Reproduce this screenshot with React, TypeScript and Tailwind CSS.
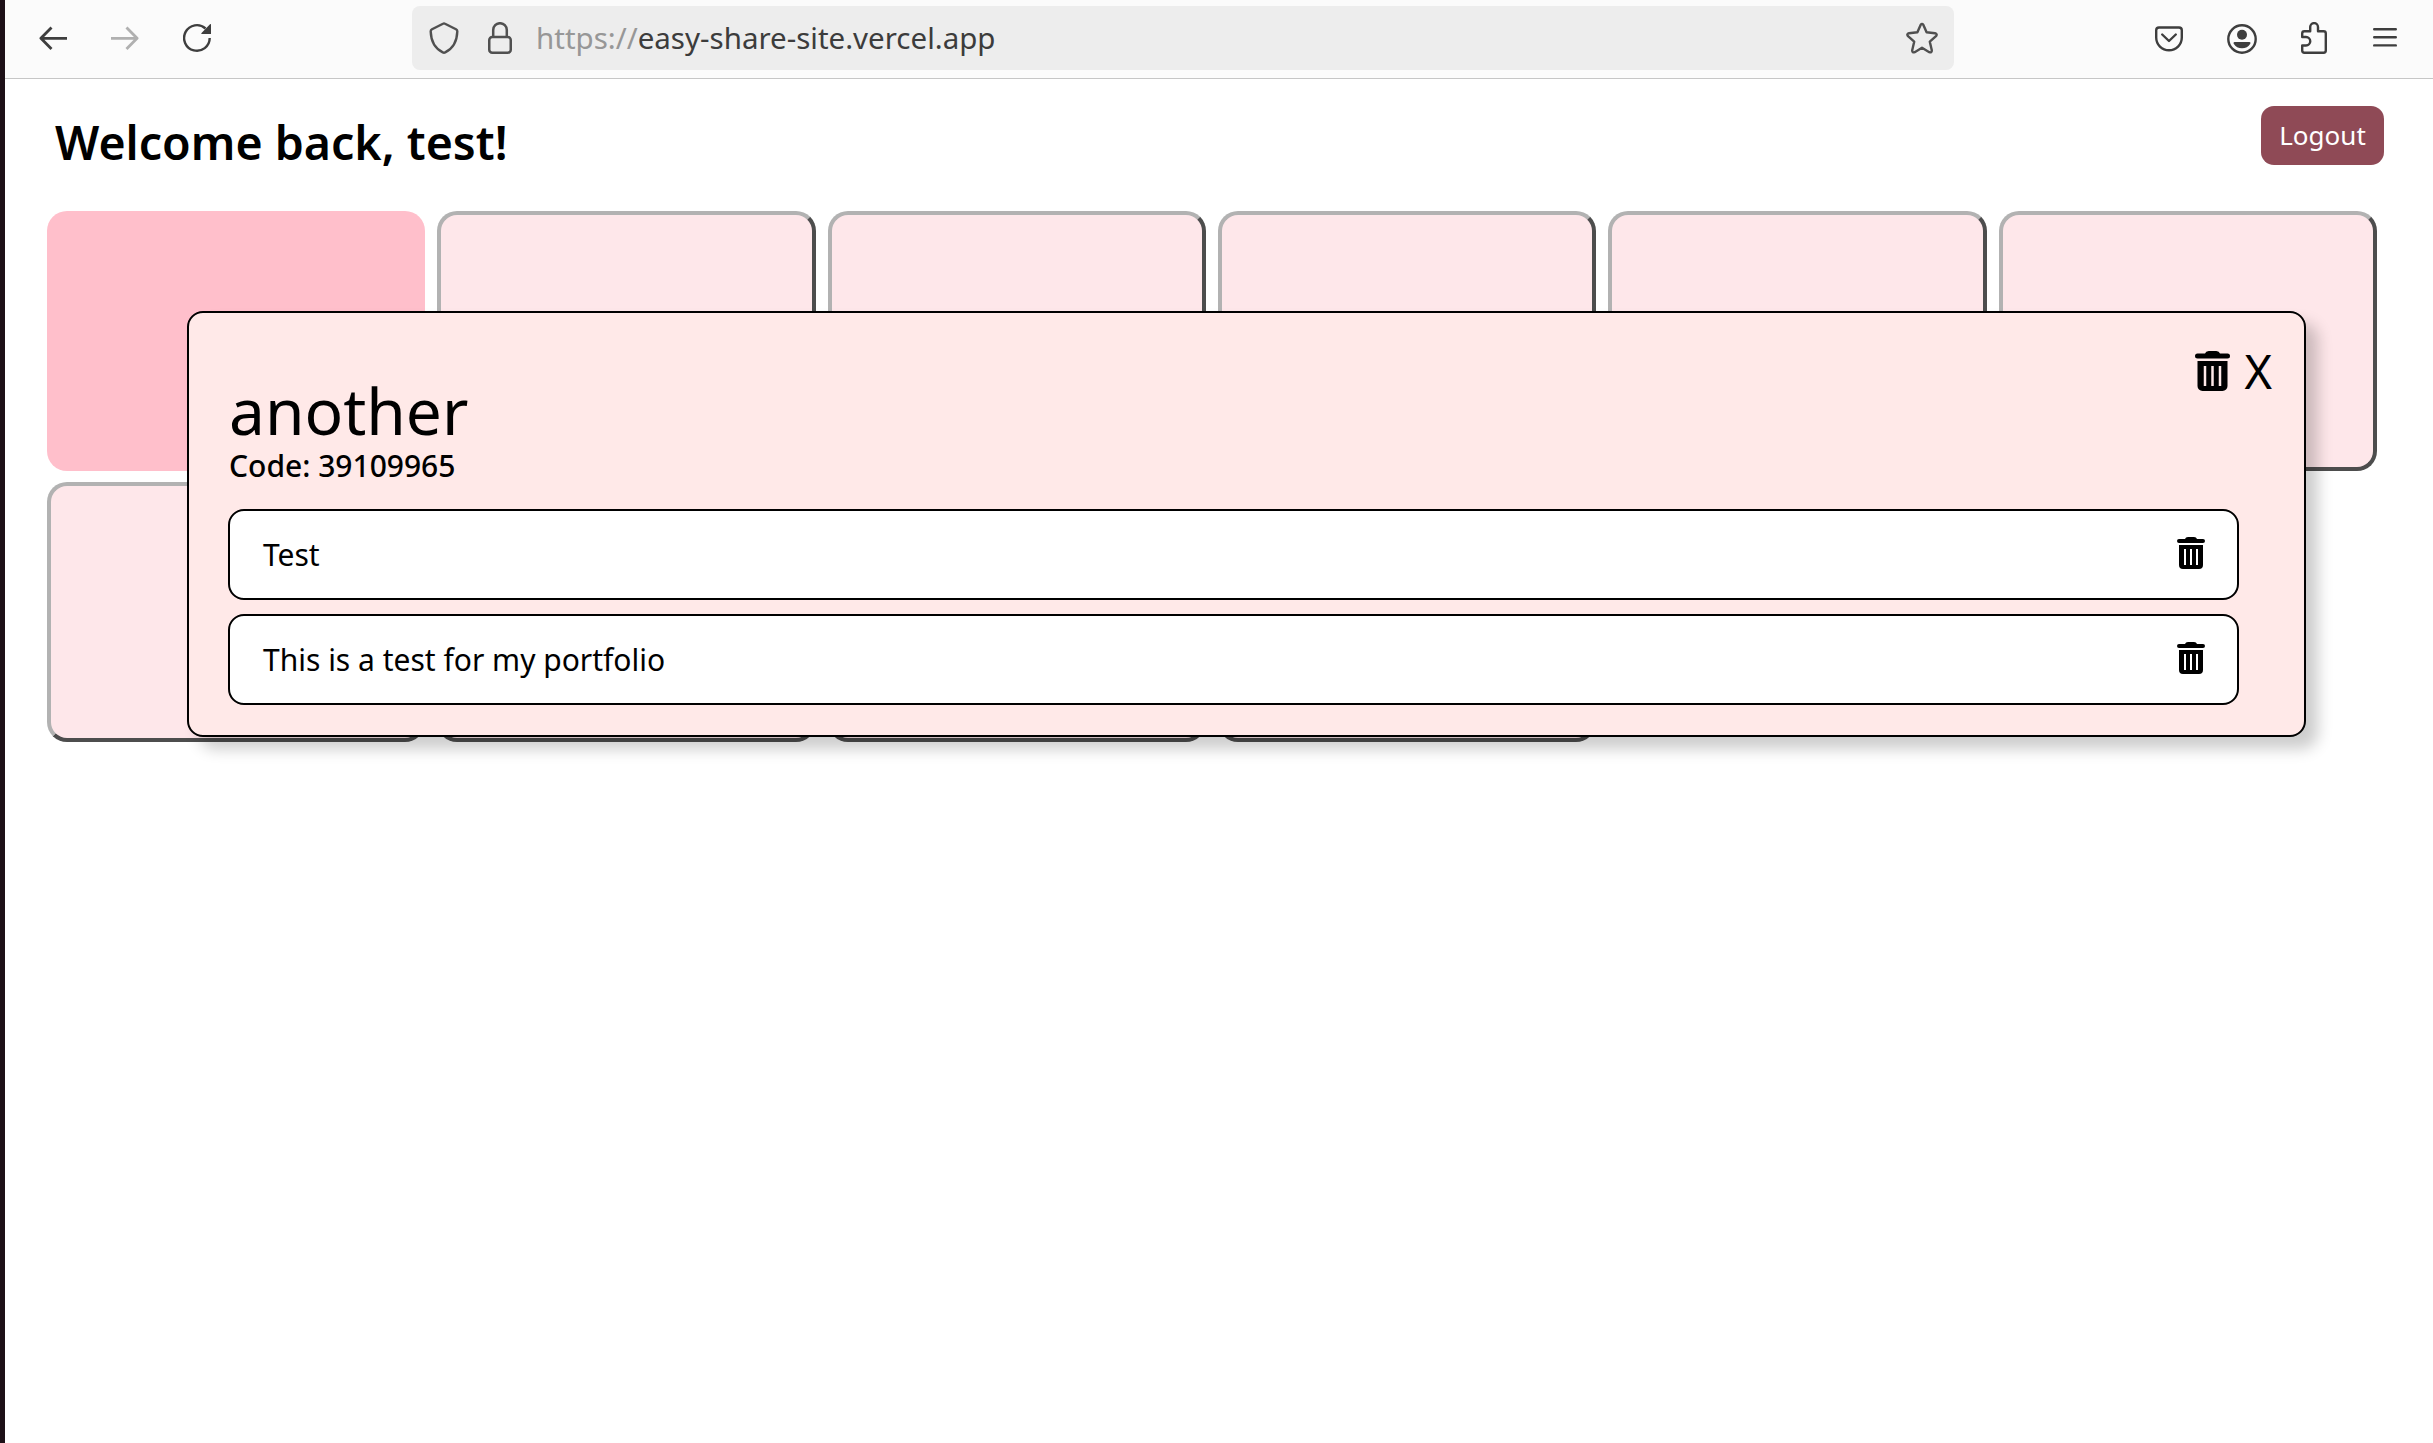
import React from "react";

function TrashIcon({ className }: { className: string }) {
  return (
    <svg viewBox="0 0 28 32" fill="currentColor" className={className} preserveAspectRatio="none">
      <path d="M2 2H8Q8.600 0 11 0H17Q19.400 0 20 2H26A2 2 0 0 1 26 6H2A2 2 0 0 1 2 2Z" />
      <path
        fillRule="evenodd"
        d="M2 8H26V28A4 4 0 0 1 22 32H6A4 4 0 0 1 2 28ZM7 12V28H9V12ZM13 12V28H15V12ZM19 12V28H21V12Z"
      />
    </svg>
  );
}

function BrowserBar() {
  return (
    <header className="flex h-[79px] items-center border-b border-[#c6c6c6] bg-[#fbfbfb] pb-0.5 pl-[34px] text-[#3e3e3e]">
      <svg className="h-8 w-7 shrink-0" viewBox="0 0 28 32" fill="none" stroke="currentColor" strokeWidth="2.8">
        <path d="M28 16.300H2M12.500 5.500L1.900 16.300L12.500 27" strokeLinejoin="round" />
      </svg>
      <svg className="ml-11 h-8 w-7 shrink-0 text-[#b0b0b0]" viewBox="0 0 28 32" fill="none" stroke="currentColor" strokeWidth="2.8">
        <path d="M0 16.300H26M15.500 5.500L26.100 16.300L15.500 27" strokeLinejoin="round" />
      </svg>
      <svg className="ml-11 h-8 w-7 shrink-0" viewBox="0 0 28 32" fill="none" stroke="currentColor" strokeWidth="2.4">
        <path d="M26.700 16A12.800 12.800 0 1 1 22.500 6.500" />
        <path d="M28 2V12H18.500Q18 11.500 18.500 11L27 2.300Z" fill="currentColor" stroke="none" />
      </svg>

      <div className="ml-[201px] flex h-16 w-[1542px] shrink-0 items-center rounded-lg bg-[#ededed] pr-4 pl-[17px] text-[#505050]">
        <svg className="h-8 w-[30px] shrink-0" viewBox="0 0 30 32" fill="none" stroke="currentColor" strokeWidth="2.400" strokeLinejoin="round">
          <path d="M14 1.700Q15 1 16 1.700L27 7.200Q28.400 8 28.300 9.500C28 19 24 26.500 16.200 30.400Q15 31 13.800 30.400C6 26.500 2 19 1.700 9.500Q1.600 8 3 7.200Z" />
        </svg>
        <svg className="ml-[29px] h-8 w-6 shrink-0" viewBox="0 0 24 32" fill="none" stroke="currentColor" strokeWidth="2.500">
          <rect x="1.250" y="15" width="21.500" height="15.700" rx="3" />
          <path d="M5.200 15V8A6.800 6.800 0 0 1 18.800 8V15" />
        </svg>
        <p className="ml-6 font-['Noto_Sans',sans-serif] text-[29.500px] leading-none whitespace-nowrap text-[#3c3c3c]">
          <span className="text-[#979797]">https://</span>easy-share-site.vercel.app
        </p>
        <svg className="ml-auto h-8 w-8 shrink-0" viewBox="0 0 32 32" fill="none" stroke="currentColor" strokeWidth="2.400" strokeLinejoin="round">
          <path d="M14.600 2.900Q16 1 17.400 2.900L20.600 10.300L29 11.200Q31.700 12 30 14.200L23.800 19.700L25.800 28.200Q25.900 31 23.300 30.200L16 25.800L8.700 30.200Q6.100 31 6.200 28.200L8.200 19.700L2 14.200Q.3 12 3 11.200L11.400 10.300Z" />
        </svg>
      </div>

      <svg className="ml-[201px] h-8 w-7 shrink-0" viewBox="0 0 28 32" fill="none" stroke="currentColor" strokeWidth="2.400" strokeLinecap="round" strokeLinejoin="round">
        <path d="M4 5.500H24Q26.800 5.500 26.800 8.300V15.500A12.800 12.800 0 0 1 1.200 15.500V8.300Q1.200 5.500 4 5.500Z" />
        <path d="M7.200 12.500L14 19L20.800 12.500" />
      </svg>
      <svg className="ml-11 h-8 w-[30px] shrink-0" viewBox="0 0 30 32" fill="none">
        <circle cx="15" cy="17" r="13.700" stroke="currentColor" strokeWidth="2.400" />
        <circle cx="15" cy="12.800" r="5" fill="currentColor" />
        <path d="M7.500 20H22.500Q24 20.300 23.300 21.800Q20.500 26.300 15 26.300Q9.500 26.300 6.700 21.800Q6 20.300 7.500 20Z" fill="currentColor" />
      </svg>
      <svg className="ml-11 h-8 w-[26px] shrink-0" viewBox="0 0 26 32" fill="none" stroke="currentColor" strokeWidth="2.400" strokeLinejoin="round">
        <path d="M1.200 15V11.500Q1.200 9.300 3.400 9.300H9.200V5A3.900 3.900 0 0 1 17 5V9.300H22.600Q24.800 9.300 24.800 11.500V28.600Q24.800 30.800 22.600 30.800H3.400Q1.200 30.800 1.200 28.600V23.500H5A4.200 4.200 0 0 0 5 15Z" />
      </svg>
      <svg className="ml-[46px] h-8 w-6 shrink-0" viewBox="0 0 24 32" stroke="currentColor" strokeWidth="2.400" strokeLinecap="round">
        <path d="M1.200 7.200H22.800M1.200 15.300H22.800M1.200 23.400H22.800" />
      </svg>
    </header>
  );
}

function BoardCard({ selected = false }: { selected?: boolean }) {
  return selected ? (
    <div className="h-[260px] rounded-[20px] bg-[#ffbfcb]" />
  ) : (
    <div className="h-[260px] rounded-[20px] border-4 border-t-[#b2b2b2] border-r-[#4d4d4d] border-b-[#4d4d4d] border-l-[#b2b2b2] bg-[#fee7ea]" />
  );
}

function NoteRow({ children }: { children: React.ReactNode }) {
  return (
    <li className="flex h-[91px] items-center justify-between rounded-[16px] border-2 border-black bg-white pr-8 pl-[33px]">
      {children}
      <TrashIcon className="mb-[3px] h-8 w-7" />
    </li>
  );
}

export default function App() {
  return (
    <div className="relative h-[1443px] w-[2433px] overflow-hidden border-l-5 border-[#1d1017] bg-white font-['Noto_Sans',sans-serif] text-black">
      <BrowserBar />

      <main className="pr-[56px] pl-[42px]">
        <div className="flex h-[132px] items-start justify-between pl-2">
          <h1 className="mt-[33px] text-[46.500px] leading-[60px] font-semibold whitespace-nowrap">Welcome back, test!</h1>
          <button className="mt-[27px] -mr-[7px] flex h-[59px] w-[123px] items-center justify-center rounded-[13px] bg-[#8f4a56] text-[26px] text-white">
            <span>Logout</span>
          </button>
        </div>
        <div className="grid grid-cols-6 gap-x-3 gap-y-[11px]">
          <BoardCard selected />
          <BoardCard />
          <BoardCard />
          <BoardCard />
          <BoardCard />
          <BoardCard />
          <BoardCard />
          <BoardCard />
          <BoardCard />
          <BoardCard />
        </div>
      </main>

      <section className="absolute top-[311px] left-[182px] h-[426px] w-[2119px] rounded-[16px] border-2 border-black bg-[#ffe9e8] pr-[65px] pl-[39px] shadow-[12px_12px_15px_rgba(0,0,0,0.2)]">
        <div className="flex h-[196px] items-start justify-between">
          <div className="pl-px">
            <h2 className="mt-[60px] text-[64px] leading-[76px] whitespace-nowrap"><span>another</span></h2>
            <p className="mt-[-3px] text-[30px] leading-[40px] font-medium whitespace-nowrap"><span>Code: 39109965</span></p>
          </div>
          <div className="mt-[38px] -mr-[33px] flex items-start">
            <TrashIcon className="h-10 w-[35px]" />
            <span className="ml-[14px] text-[47px] leading-[40px]">X</span>
          </div>
        </div>
        <ul className="flex flex-col gap-[14px]">
          <NoteRow><span className="text-[30px] whitespace-nowrap">Test</span></NoteRow>
          <NoteRow><span className="text-[30px] whitespace-nowrap">This is a test for my portfolio</span></NoteRow>
        </ul>
      </section>
    </div>
  );
}
